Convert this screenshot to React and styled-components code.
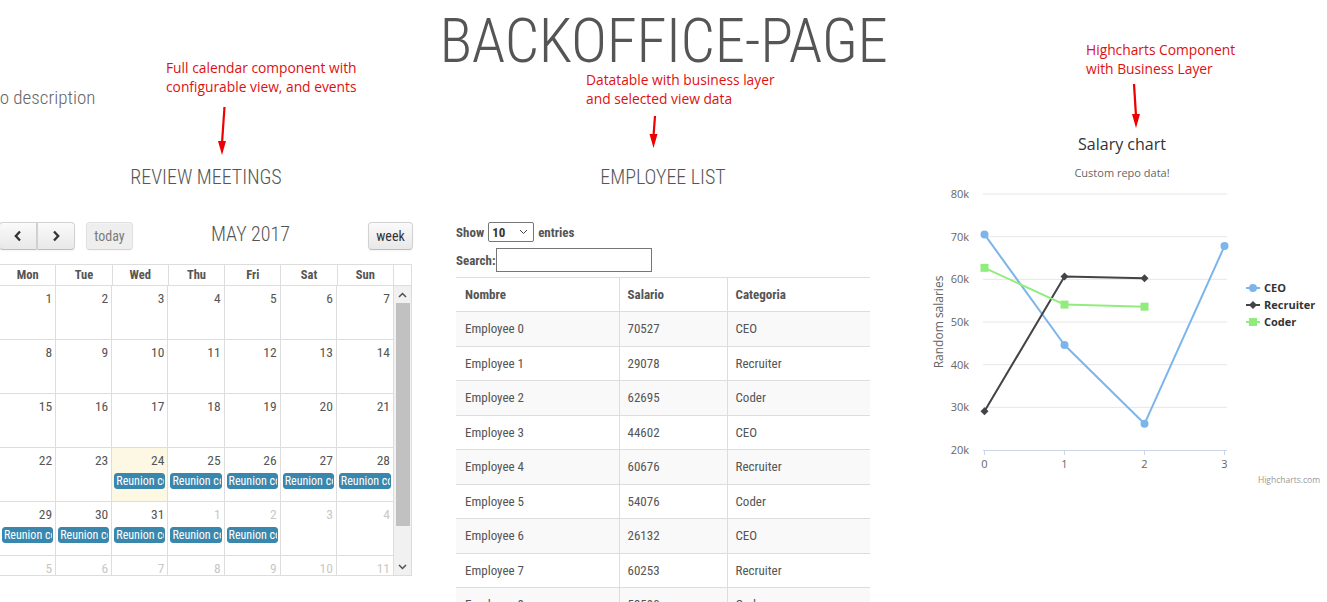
import React from 'react';
import styled, { createGlobalStyle } from 'styled-components';

const GlobalStyle = createGlobalStyle`
  html, body { margin: 0; padding: 0; background: #fff; }
  body {
    font-family: "Roboto Condensed", Roboto, "Liberation Sans", sans-serif;
    font-stretch: condensed;
    color: #555;
    overflow: hidden;
  }
  * { box-sizing: border-box; }
`;

const Page = styled.div`
  position: relative;
  width: 1327px;
  height: 602px;
  overflow: hidden;
`;

const Title = styled.h1`
  margin: 5px 0 0;
  text-align: center;
  font-weight: 300;
  font-size: 61px;
  line-height: 72px;
  letter-spacing: -0.3px;
  color: #555;
`;

const Description = styled.p`
  margin: 9px 0 0 -12px;
  font-size: 19px;
  line-height: 24px;
  font-weight: 300;
  color: #666;
`;

const Columns = styled.div`
  display: grid;
  grid-template-columns: repeat(3, 414px);
  column-gap: 43px;
  margin-left: -1px;
  align-items: start;
`;

const Column = styled.section`
  display: flex;
  flex-direction: column;
  min-width: 0;
`;

const SectionTitle = styled.h3`
  margin: 54px 0 0;
  text-align: center;
  font-weight: 300;
  font-size: 20px;
  line-height: 26px;
  color: #555;
`;

/* ---------- Calendar ---------- */
const Toolbar = styled.div`
  display: flex;
  align-items: center;
  margin-top: 32px;
  height: 28px;
`;

const ButtonGroup = styled.div`
  display: flex;
`;

const FcButton = styled.button`
  height: 28px;
  width: ${p => p.$w}px;
  margin-left: ${p => p.$ml || 0}px;
  padding: 0;
  display: flex;
  align-items: center;
  justify-content: center;
  font-family: inherit;
  font-size: 14px;
  color: #333;
  background: ${p => (p.disabled ? '#e6e6e6' : 'linear-gradient(#fafafa, #e8e8e8)')};
  border: 1px solid #d2d2d2;
  border-bottom-color: #bdbdbd;
  border-radius: ${p => p.$radius || '4px'};
  box-shadow: inset 0 1px 0 rgba(255, 255, 255, 0.3), 0 1px 2px rgba(0, 0, 0, 0.05);
  opacity: ${p => (p.disabled ? 0.65 : 1)};
`;

const ToolbarTitle = styled.h2`
  flex: 1;
  margin: 0;
  text-align: center;
  font-weight: 300;
  font-size: 20px;
  line-height: 28px;
  color: #555;
  position: relative;
  top: -2px;
`;

const CalView = styled.div`
  margin-top: 14px;
  width: 413px;
  border: 1px solid #ddd;
`;

const HeadRow = styled.div`
  display: grid;
  grid-template-columns: repeat(7, 1fr) 17px;
  border-bottom: 1px solid #ddd;
`;

const HeadCell = styled.div`
  height: 20px;
  line-height: 20px;
  text-align: center;
  font-weight: 700;
  font-size: 12.5px;
  color: #555;
  border-right: 1px solid #ddd;
  &:last-child { border-right: none; }
`;

const CalBody = styled.div`
  display: flex;
  height: 289px;
`;

const DayScroller = styled.div`
  flex: 1;
  overflow: hidden;
  border-right: 1px solid #ddd;
`;

const WeekRow = styled.div`
  display: grid;
  grid-template-columns: repeat(7, 1fr);
  height: 54px;
  border-bottom: 1px solid #ddd;
`;

const DayCell = styled.div`
  min-width: 0;
  border-right: 1px solid #ddd;
  background: ${p => (p.$today ? '#fcf8e3' : 'transparent')};
  &:last-child { border-right: none; }
`;

const DayNum = styled.div`
  padding: 2px 3px 0 0;
  text-align: right;
  font-size: 13.5px;
  line-height: 20px;
  color: ${p => (p.$other ? '#c8c8c8' : '#555')};
`;

const Event = styled.div`
  margin: 3px 2px 0;
  height: 16px;
  padding: 0 1px;
  background: #3a87ad;
  border: 1px solid #3a87ad;
  border-radius: 3px;
  color: #fff;
  font-size: 12px;
  line-height: 14px;
  white-space: nowrap;
  overflow: hidden;
`;

const ScrollBar = styled.div`
  width: 17px;
  display: flex;
  flex-direction: column;
  background: #f1f1f1;
`;

const ScrollArrow = styled.div`
  height: 17px;
  display: flex;
  align-items: center;
  justify-content: center;
`;

const ScrollThumb = styled.div`
  margin: 0 1px 0 2px;
  height: 223px;
  background: #c1c1c1;
`;

const ScrollTrack = styled.div`
  flex: 1;
`;

const Chevron = ({ dir }) => (
  <svg width="10" height="12" viewBox="0 0 10 12">
    <polyline
      points={dir === 'left' ? '7,1.5 2.8,6 7,10.5' : '3,1.5 7.2,6 3,10.5'}
      fill="none"
      stroke="#333"
      strokeWidth="2.3"
    />
  </svg>
);

const SmallChevron = ({ up }) => (
  <svg width="9" height="6" viewBox="0 0 9 6">
    <polyline points={up ? '1,5 4.5,1.5 8,5' : '1,1 4.5,4.5 8,1'} fill="none" stroke="#505050" strokeWidth="1.5" />
  </svg>
);

const dayNames = ['Mon', 'Tue', 'Wed', 'Thu', 'Fri', 'Sat', 'Sun'];

function Calendar() {
  const cells = Array.from({ length: 42 }, (_, i) => {
    const n = i + 1;
    return {
      n: n > 31 ? n - 31 : n,
      other: n > 31,
      today: i === 23,
      event: i >= 23 && i <= 32,
    };
  });
  const weeks = [0, 1, 2, 3, 4, 5].map(w => cells.slice(w * 7, w * 7 + 7));
  return (
    <>
      <Toolbar>
        <ButtonGroup>
          <FcButton $w={38} $radius="4px 0 0 4px" aria-label="prev"><Chevron dir="left" /></FcButton>
          <FcButton $w={38} $radius="0 4px 4px 0" aria-label="next"><Chevron dir="right" /></FcButton>
        </ButtonGroup>
        <FcButton $w={47} $ml={11} disabled>today</FcButton>
        <ToolbarTitle>MAY 2017</ToolbarTitle>
        <FcButton $w={45}>week</FcButton>
      </Toolbar>
      <CalView>
        <HeadRow>
          {dayNames.map(d => <HeadCell key={d}>{d}</HeadCell>)}
          <HeadCell />
        </HeadRow>
        <CalBody>
          <DayScroller>
            {weeks.map((w, wi) => (
              <WeekRow key={wi}>
                {w.map((c, ci) => (
                  <DayCell key={ci} $today={c.today}>
                    <DayNum $other={c.other}>{c.n}</DayNum>
                    {c.event && <Event>Reunion co</Event>}
                  </DayCell>
                ))}
              </WeekRow>
            ))}
          </DayScroller>
          <ScrollBar>
            <ScrollArrow><SmallChevron up /></ScrollArrow>
            <ScrollThumb />
            <ScrollTrack />
            <ScrollArrow><SmallChevron /></ScrollArrow>
          </ScrollBar>
        </CalBody>
      </CalView>
    </>
  );
}

/* ---------- Datatable ---------- */
const Controls = styled.div`
  margin-top: 32px;
  display: flex;
  flex-direction: column;
  gap: 6px;
  font-size: 13px;
  font-weight: 700;
  color: #555;
`;

const ControlRow = styled.label`
  display: flex;
  align-items: center;
  gap: ${p => p.$gap || 0}px;
  height: ${p => p.$h}px;
`;

const SelectWrap = styled.span`
  position: relative;
  display: inline-flex;
`;

const Select = styled.select`
  appearance: none;
  width: 46px;
  height: 20px;
  padding: 0 0 0 3px;
  font-family: inherit;
  font-size: 13px;
  font-weight: 700;
  color: #333;
  background: #fff;
  border: 1px solid #767676;
  border-radius: 2px;
`;

const SelectIcon = styled.svg`
  position: absolute;
  right: 6px;
  top: 7px;
  pointer-events: none;
`;

const SearchInput = styled.input`
  width: 156px;
  height: 24px;
  margin: 0 0 0 1px;
  border: 1px solid #767676;
  border-radius: 0;
  font: inherit;
`;

const Table = styled.table`
  margin-top: 5px;
  width: 414px;
  border-collapse: collapse;
  table-layout: fixed;
  font-size: 13px;
  color: #555;
`;

const Th = styled.th`
  text-align: left;
  font-weight: 700;
  padding: 8px 8px 8px ${p => p.$pl || 8}px;
  line-height: 17px;
  border-top: 1px solid #ddd;
  border-bottom: 1px solid #ddd;
  & + & { border-left: 1px solid #ddd; }
`;

const Tr = styled.tr`
  background: ${p => (p.$odd ? '#fff' : '#f9f9f9')};
`;

const Td = styled.td`
  padding: 8px 8px 8px ${p => p.$pl || 8}px;
  line-height: 17.5px;
  border-top: 1px solid #ddd;
  white-space: nowrap;
  & + & { border-left: 1px solid #ddd; }
`;

const employees = [
  ['Employee 0', '70527', 'CEO'],
  ['Employee 1', '29078', 'Recruiter'],
  ['Employee 2', '62695', 'Coder'],
  ['Employee 3', '44602', 'CEO'],
  ['Employee 4', '60676', 'Recruiter'],
  ['Employee 5', '54076', 'Coder'],
  ['Employee 6', '26132', 'CEO'],
  ['Employee 7', '60253', 'Recruiter'],
  ['Employee 8', '53590', 'Coder'],
  ['Employee 9', '67800', 'CEO'],
];

function DataTable() {
  return (
    <>
      <Controls>
        <ControlRow $h={20} $gap={4}>
          Show
          <SelectWrap>
            <Select defaultValue="10">
              <option>10</option>
              <option>25</option>
              <option>50</option>
            </Select>
            <SelectIcon width="9" height="6" viewBox="0 0 9 6">
              <polyline points="1,1 4.5,4.5 8,1" fill="none" stroke="#444" strokeWidth="1" />
            </SelectIcon>
          </SelectWrap>
          entries
        </ControlRow>
        <ControlRow $h={24}>
          Search:<SearchInput type="search" />
        </ControlRow>
      </Controls>
      <Table>
        <colgroup>
          <col style={{ width: 163 }} />
          <col style={{ width: 108 }} />
          <col style={{ width: 143 }} />
        </colgroup>
        <thead>
          <tr>
            <Th $pl={9}>Nombre</Th>
            <Th>Salario</Th>
            <Th>Categoria</Th>
          </tr>
        </thead>
        <tbody>
          {employees.map((r, i) => (
            <Tr key={r[0]} $odd={i % 2 === 1}>
              <Td $pl={9}>{r[0]}</Td>
              <Td>{r[1]}</Td>
              <Td>{r[2]}</Td>
            </Tr>
          ))}
        </tbody>
      </Table>
    </>
  );
}

/* ---------- Chart ---------- */
const ChartSvg = styled.svg`
  display: block;
  margin-top: 18px;
  font-family: "Open Sans", "DejaVu Sans", sans-serif;
  font-stretch: normal;
`;

const yv = v => 450 - ((v - 20000) * 256) / 60000;
const xv = i => 984.5 + i * 80;
const series = [
  { name: 'CEO', color: '#7cb5ec', data: [70527, 44602, 26132, 67800], marker: 'circle' },
  { name: 'Recruiter', color: '#434348', data: [29078, 60676, 60253], marker: 'diamond' },
  { name: 'Coder', color: '#90ed7d', data: [62695, 54076, 53590], marker: 'square' },
];

const Marker = ({ type, x, y, color }) => {
  if (type === 'circle') return <circle cx={x} cy={y} r="4" fill={color} />;
  if (type === 'square') return <rect x={x - 4} y={y - 4} width="8" height="8" fill={color} />;
  return <path d={`M${x} ${y - 4} L${x + 4} ${y} L${x} ${y + 4} L${x - 4} ${y} Z`} fill={color} />;
};

function SalaryChart() {
  const ticks = [80, 70, 60, 50, 40, 30, 20];
  return (
    <ChartSvg width="414" height="360" viewBox="0 0 414 360">
      <g transform="translate(-913 -128)">
        <text x="1122" y="150" textAnchor="middle" fontSize="16" fill="#333">Salary chart</text>
        <text x="1122" y="177" textAnchor="middle" fontSize="11" fill="#666">Custom repo data!</text>
        {ticks.map(t => (
          <g key={t}>
            {t !== 20 && (
              <line x1="983" x2="1227" y1={yv(t * 1000)} y2={yv(t * 1000)} stroke="#e6e6e6" strokeWidth="1" />
            )}
            <text x="969" y={yv(t * 1000) + 4} textAnchor="end" fontSize="11" fill="#666">{t}k</text>
          </g>
        ))}
        <line x1="983" x2="1227" y1="450.5" y2="450.5" stroke="#ccd6eb" strokeWidth="1" />
        {[0, 1, 2, 3].map(i => (
          <g key={i}>
            <line x1={xv(i)} x2={xv(i)} y1="450" y2="455" stroke="#ccd6eb" />
            <text x={xv(i)} y="468" textAnchor="middle" fontSize="11" fill="#666">{i}</text>
          </g>
        ))}
        <text transform="translate(943 322) rotate(-90)" textAnchor="middle" fontSize="12" fill="#666">Random salaries</text>
        {series.map(s => (
          <g key={s.name}>
            <polyline
              points={s.data.map((v, i) => `${xv(i)},${yv(v)}`).join(' ')}
              fill="none"
              stroke={s.color}
              strokeWidth="2"
              strokeLinejoin="round"
            />
            {s.data.map((v, i) => <Marker key={i} type={s.marker} x={xv(i)} y={yv(v)} color={s.color} />)}
          </g>
        ))}
        {series.map((s, i) => (
          <g key={s.name}>
            <line x1="1246" x2="1260" y1={288 + i * 17} y2={288 + i * 17} stroke={s.color} strokeWidth="2" />
            <Marker type={s.marker} x={1253} y={288 + i * 17} color={s.color} />
            <text x="1264" y={292 + i * 17} fontSize="11" fontWeight="700" fill="#333">{s.name}</text>
          </g>
        ))}
        <text x="1320" y="483" textAnchor="end" fontSize="8.5" fill="#999">Highcharts.com</text>
      </g>
    </ChartSvg>
  );
}

/* ---------- Callouts (annotations drawn over the screenshot) ---------- */
const Callout = styled.div`
  position: absolute;
  left: ${p => p.$x}px;
  top: ${p => p.$y}px;
  font-family: "Open Sans", "Noto Sans", sans-serif;
  font-stretch: normal;
  font-size: 13.8px;
  line-height: 19px;
  color: #dd1111;
  white-space: nowrap;
`;

const ArrowLayer = styled.svg`
  position: absolute;
  left: 0;
  top: 0;
  pointer-events: none;
`;

const arrows = [
  { x1: 224.5, y1: 107, x2: 222, y2: 155 },
  { x1: 655, y1: 116, x2: 653.5, y2: 148 },
  { x1: 1134, y1: 84, x2: 1136, y2: 128 },
];

export default function App() {
  return (
    <Page>
      <GlobalStyle />
      <Title>BACKOFFICE-PAGE</Title>
      <Description>No description</Description>
      <Columns>
        <Column>
          <SectionTitle>REVIEW MEETINGS</SectionTitle>
          <Calendar />
        </Column>
        <Column>
          <SectionTitle>EMPLOYEE LIST</SectionTitle>
          <DataTable />
        </Column>
        <Column>
          <SalaryChart />
        </Column>
      </Columns>

      <Callout $x={166} $y={58}>Full calendar component with<br />configurable view, and events</Callout>
      <Callout $x={586} $y={70}>Datatable with business layer<br />and selected view data</Callout>
      <Callout $x={1086} $y={40}>Highcharts Component<br />with Business Layer</Callout>
      <ArrowLayer width="1327" height="602">
        {arrows.map((a, i) => {
          const head = a.y2 - 14;
          return (
            <g key={i}>
              <line x1={a.x1} y1={a.y1} x2={a.x2} y2={head + 2} stroke="#e00" strokeWidth="2.2" />
              <path d={`M${a.x2 - 4} ${head} L${a.x2 + 4} ${head} L${a.x2} ${a.y2} Z`} fill="#e00" />
            </g>
          );
        })}
      </ArrowLayer>
    </Page>
  );
}
